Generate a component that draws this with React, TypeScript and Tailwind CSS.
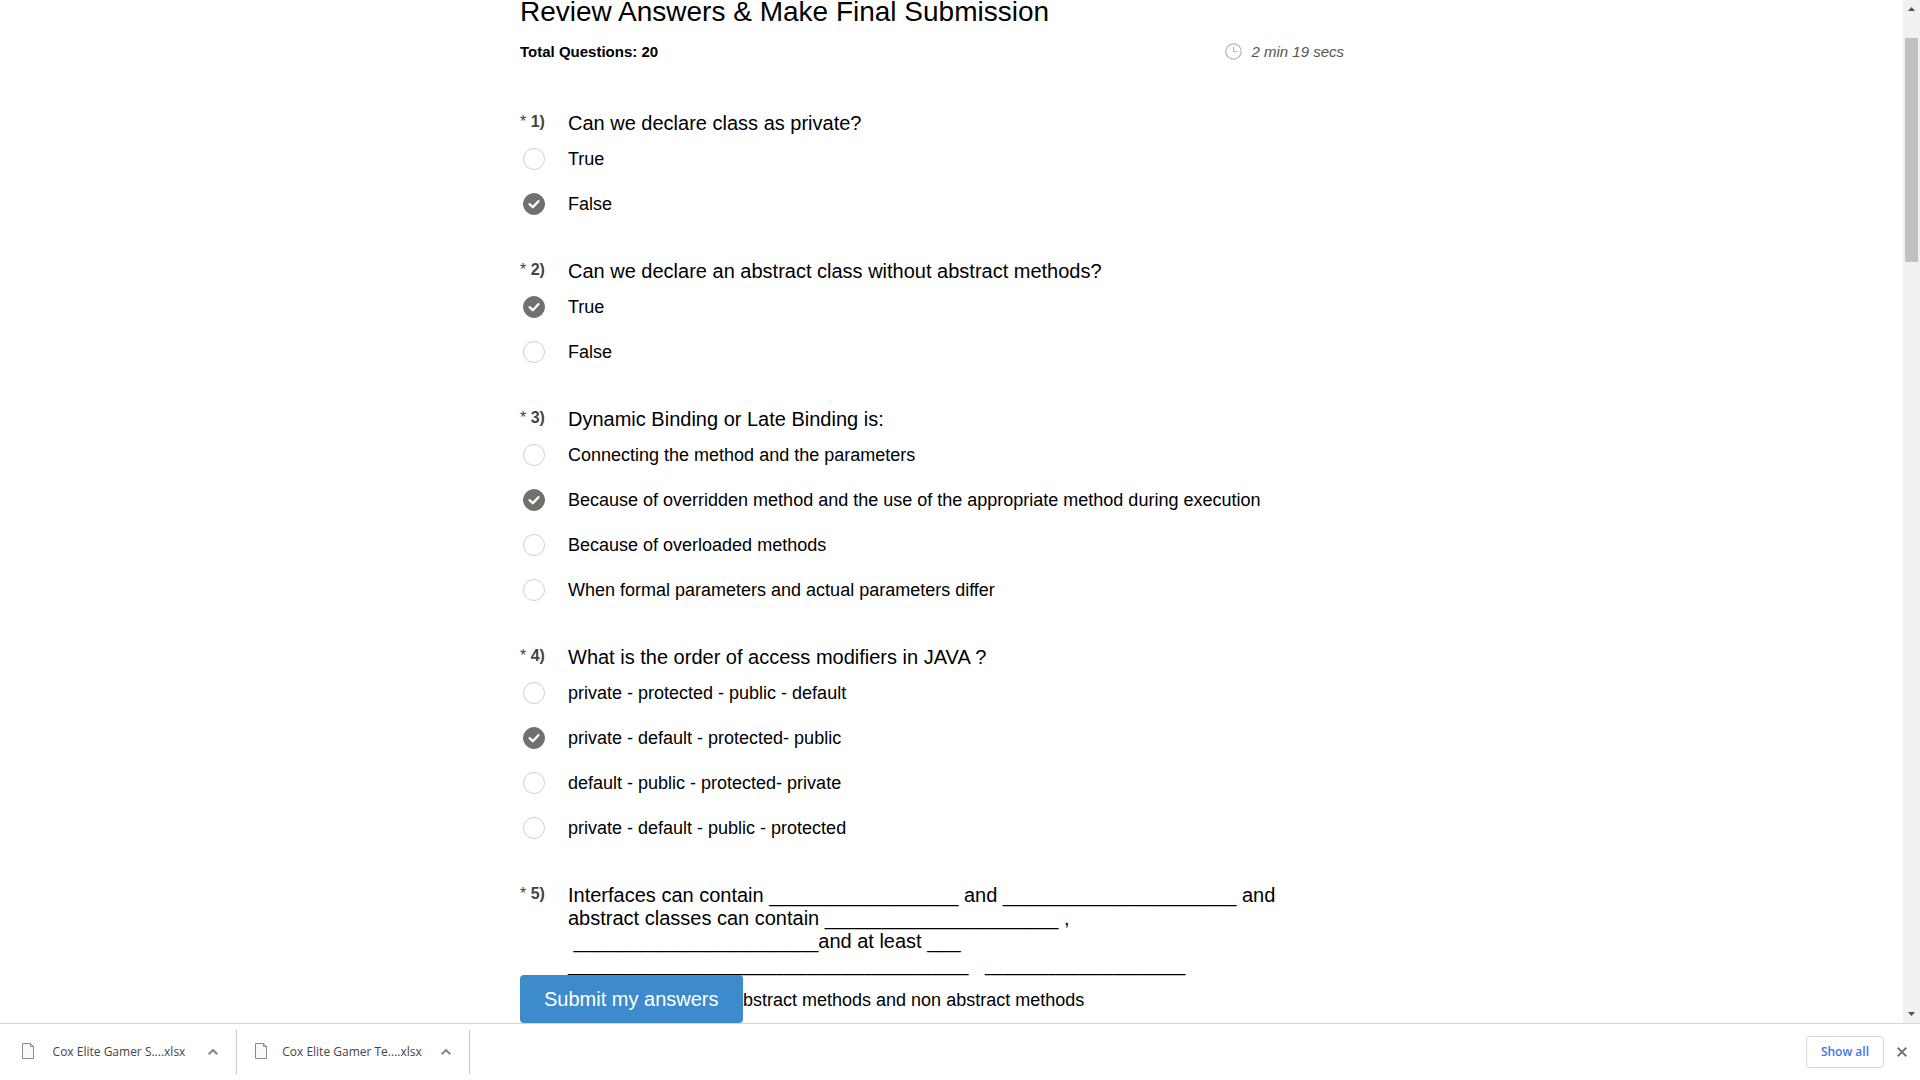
import React from "react";

type Option = { text: string; indent?: boolean };
type Question = { text: string; options: Option[]; answer: number };

const blank = (n: number) => "_".repeat(n);

const questions: Question[] = [
  {
    text: "Can we declare class as private?",
    options: [{ text: "True" }, { text: "False" }],
    answer: 1,
  },
  {
    text: "Can we declare an abstract class without abstract methods?",
    options: [{ text: "True" }, { text: "False" }],
    answer: 0,
  },
  {
    text: "Dynamic Binding or Late Binding is:",
    options: [
      { text: "Connecting the method and the parameters" },
      { text: "Because of overridden method and the use of the appropriate method during execution" },
      { text: "Because of overloaded methods" },
      { text: "When formal parameters and actual parameters differ" },
    ],
    answer: 1,
  },
  {
    text: "What is the order of access modifiers in JAVA ?",
    options: [
      { text: "private - protected - public - default" },
      { text: "private - default - protected- public" },
      { text: "default - public - protected- private" },
      { text: "private - default - public - protected" },
    ],
    answer: 1,
  },
  {
    text: `Interfaces can contain ${blank(17)} and ${blank(21)} and abstract classes can contain ${blank(21)} , \u00a0${blank(22)}and at least ${blank(3)} ${blank(36)}\u00a0\u00a0\u00a0${blank(18)}`,
    options: [{ text: "abstract methods and non abstract methods", indent: true }],
    answer: -1,
  },
];

function OptionRow({ name, option, checked }: { name: string; option: Option; checked: boolean }) {
  return (
    <label className="flex h-[45px] items-center">
      <span className="ml-[3px] mr-[23px] grid shrink-0 place-items-center">
        <input
          type="radio"
          name={name}
          defaultChecked={checked}
          className="peer col-start-1 row-start-1 size-[22px] appearance-none rounded-full border border-[#d0d0c8] bg-white checked:border-[#70706c] checked:bg-[#70706c]"
        />
        <svg
          viewBox="0 0 22 22"
          className="pointer-events-none col-start-1 row-start-1 hidden size-[22px] peer-checked:block"
          fill="none"
          stroke="#fff"
          strokeWidth="2.4"
          strokeLinecap="round"
          strokeLinejoin="round"
        >
          <path d="M6.6 11.2 L9.8 14.2 L15.4 8.2" />
        </svg>
      </span>
      <span className={option.indent ? "pl-[165px] text-lg" : "text-lg"}>{option.text}</span>
    </label>
  );
}

function QuestionBlock({ question, index }: { question: Question; index: number }) {
  return (
    <fieldset className="mb-[34px]">
      <legend className="flex">
        <span className="w-[48px] shrink-0 text-base leading-5 text-[#444]">
          * <b>{index + 1})</b>
        </span>
        <span className="text-xl leading-[23px]">{question.text}</span>
      </legend>
      <div className="pt-px">
        {question.options.map((option, i) => (
          <OptionRow key={i} name={`q${index}`} option={option} checked={i === question.answer} />
        ))}
      </div>
    </fieldset>
  );
}

function DownloadItem({ name }: { name: string }) {
  return (
    <div className="my-[6px] flex w-[233px] items-center border-r border-[#c8c8c8] px-[18px]">
      <svg width="12" height="16" viewBox="0 0 12 16" className="mb-0.5" fill="#f8fafa" stroke="#8a8a8a">
        <path d="M.5 .5H8.5L11.5 3.5V15.5H.5Z" />
        <path d="M8.5 .5V3.5H11.5" fill="none" />
      </svg>
      <span className="mr-1 flex-1 whitespace-nowrap text-center text-[12px] text-[#444]">{name}</span>
      <button aria-label={`Options for ${name}`}>
        <svg width="10" height="6" viewBox="0 0 10 6" fill="none" stroke="#858585" strokeWidth="2">
          <path d="M.7 5.3 L5 1 L9.3 5.3" />
        </svg>
      </button>
    </div>
  );
}

export default function App() {
  return (
    <div className="flex h-screen flex-col bg-white text-black">
      <div className="flex min-h-0 flex-1">
        <main className="relative min-w-0 flex-1 overflow-hidden font-['Liberation_Sans',Arial,sans-serif]">
          <div className="mx-auto max-w-[863px] pr-[39px]">
            <h1 className="-mt-1 text-[28px] leading-8">Review Answers &amp; Make Final Submission</h1>
            <div className="mb-12 mt-3 flex items-center justify-between text-[15px] leading-6">
              <b>Total Questions: 20</b>
              <span className="flex items-center italic text-[#555]">
                <svg width="17" height="17" viewBox="0 0 17 17" className="mb-0.5 mr-[9px]" fill="none" stroke="#b4b4b4">
                  <circle cx="8.5" cy="8.5" r="7.7" strokeWidth="1.2" />
                  <path d="M8.5 3.5V8.5H12.5" />
                </svg>
                2 min 19 secs
              </span>
            </div>
            {questions.map((question, i) => (
              <QuestionBlock key={i} question={question} index={i} />
            ))}
          </div>
          <div className="pointer-events-none absolute inset-x-0 bottom-0">
            <div className="mx-auto max-w-[863px]">
              <button className="pointer-events-auto block h-12 rounded-sm bg-[#3d8bcc] px-6 text-xl text-white">
                Submit my answers
              </button>
            </div>
          </div>
        </main>
        <div className="flex w-[17px] flex-col items-center justify-between bg-[#f1f1f1]">
          <div className="flex flex-col items-center">
            <svg width="7" height="4" viewBox="0 0 7 4" className="mb-[27px] mt-[7px]" fill="#505050">
              <path d="M0 4L3.5 0L7 4Z" />
            </svg>
            <div className="h-[224px] w-[13px] bg-[#c1c1c1]" />
          </div>
          <svg width="7" height="4" viewBox="0 0 7 4" className="mb-[7px]" fill="#505050">
            <path d="M0 0L3.5 4L7 0Z" />
          </svg>
        </div>
      </div>
      <footer className="flex h-[57px] shrink-0 border-t border-[#d5d5d5] pl-1 font-['Open_Sans','Noto_Sans',sans-serif]">
        <DownloadItem name="Cox Elite Gamer S....xlsx" />
        <DownloadItem name="Cox Elite Gamer Te....xlsx" />
        <div className="ml-auto flex items-center pr-[13px]">
          <button className="mr-[13px] h-8 rounded border border-[#d8d8d8] px-[14px] text-[12px] font-semibold text-[#3b78e7]">
            Show all
          </button>
          <button aria-label="Close">
            <svg width="10" height="10" viewBox="0 0 10 10" stroke="#757575" strokeWidth="2">
              <path d="M.7 .7L9.3 9.3M9.3 .7L.7 9.3" />
            </svg>
          </button>
        </div>
      </footer>
    </div>
  );
}
